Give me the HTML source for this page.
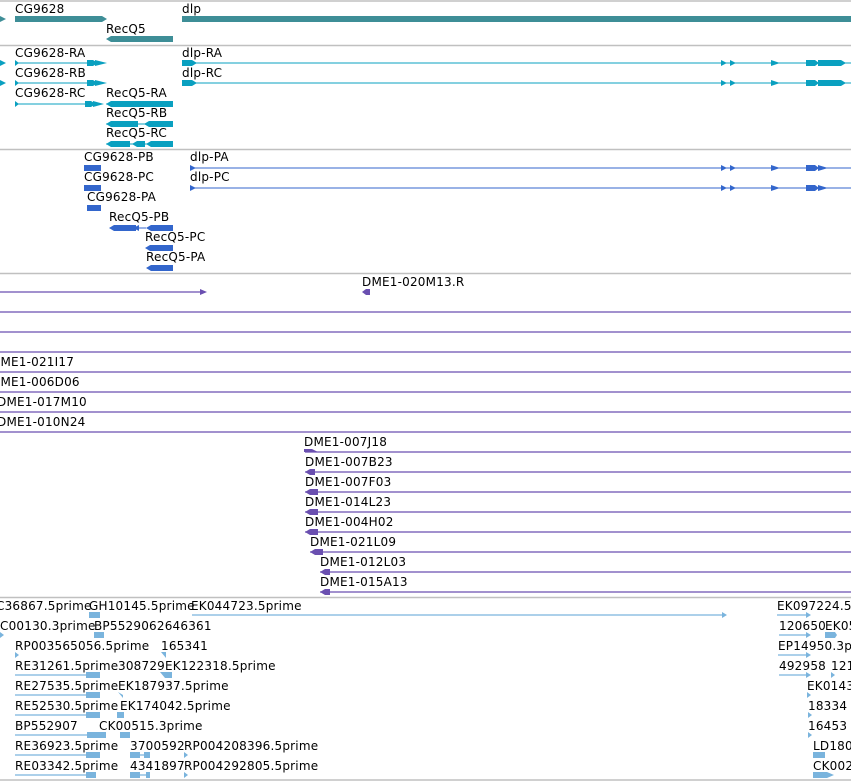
<!DOCTYPE html>
<html><head><meta charset="utf-8"><style>
html,body{margin:0;padding:0;background:#fff;width:851px;height:781px;overflow:hidden}
svg{display:block}
text{font-family:"DejaVu Sans","Liberation Sans",sans-serif;font-size:12px;fill:#000;letter-spacing:0.2px}
</style></head><body>
<svg width="851" height="781" xmlns="http://www.w3.org/2000/svg">
<g stroke="#c0c0c0" stroke-width="1.5">
<line x1="0" y1="1" x2="851" y2="1"/><line x1="0" y1="45.5" x2="851" y2="45.5"/>
<line x1="0" y1="149.5" x2="851" y2="149.5"/><line x1="0" y1="273.5" x2="851" y2="273.5"/>
<line x1="0" y1="597.5" x2="851" y2="597.5"/><line x1="0" y1="780" x2="851" y2="780"/>
</g>
<g fill="#3e8e97">
<polygon points="0,16 6,19 0,22"/>
<polygon points="15,16 102,16 107,19 102,22 15,22"/>
<polygon points="106,39 111,36 173,36 173,42 111,42"/>
<rect x="182" y="16" width="669" height="6"/>
</g>
<text x="15" y="13">CG9628</text><text x="106" y="33">RecQ5</text><text x="182" y="13">dlp</text>
<g fill="#0aa0c0" stroke="#0aa0c0">
<line x1="0" y1="63" x2="4" y2="63"/><line x1="15" y1="63" x2="100" y2="63"/><line x1="182" y1="63" x2="851" y2="63"/>
<line x1="0" y1="83" x2="4" y2="83"/><line x1="15" y1="83" x2="100" y2="83"/><line x1="182" y1="83" x2="851" y2="83"/>
<line x1="15" y1="104" x2="100" y2="104"/>
<line x1="106" y1="104" x2="173" y2="104"/><line x1="106" y1="124" x2="173" y2="124"/><line x1="106" y1="144" x2="173" y2="144"/>
</g>
<g fill="#0aa0c0">
<polygon points="0,60 6,63 0,66"/><polygon points="0,80 6,83 0,86"/>
<polygon points="15,60 19,63 15,66"/><polygon points="15,80 19,83 15,86"/><polygon points="15,101 19,104 15,107"/>
<polygon points="87,60 93,60 98,63 93,66 87,66"/><polygon points="95,60 107,63 95,66"/>
<polygon points="87,80 93,80 98,83 93,86 87,86"/><polygon points="95,80 107,83 95,86"/>
<polygon points="85,101 91,101 96,104 91,107 85,107"/><polygon points="93,101 104,104 93,107"/>
<polygon points="106,104 111,101 173,101 173,107 111,107"/>
<polygon points="106,124 111,121 138,121 138,127 111,127"/><polygon points="144,124 149,121 173,121 173,127 149,127"/>
<polygon points="106,144 111,141 130,141 130,147 111,147"/><polygon points="132,144 137,141 145,141 145,147 137,147"/><polygon points="146,144 151,141 173,141 173,147 151,147"/>
<polygon points="182,60 192,60 197,63 192,66 182,66"/><polygon points="182,80 192,80 197,83 192,86 182,86"/>
<g id="dx"><polygon points="721,60 727,63 721,66"/><polygon points="730,60 736,63 730,66"/><polygon points="771,60 780,63 771,66"/><polygon points="806,60 815,60 819,63 815,66 806,66"/><polygon points="818,60 841,60 846,63 841,66 818,66"/></g>
<use href="#dx" y="20"/>
</g>
<text x="15" y="57">CG9628-RA</text><text x="15" y="77">CG9628-RB</text><text x="15" y="97">CG9628-RC</text>
<text x="106" y="97">RecQ5-RA</text><text x="106" y="117">RecQ5-RB</text><text x="106" y="137">RecQ5-RC</text>
<text x="182" y="57">dlp-RA</text><text x="182" y="77">dlp-RC</text>
<g fill="#3366cc">
<line x1="190" y1="168" x2="851" y2="168" stroke="#3366cc"/><line x1="190" y1="188" x2="851" y2="188" stroke="#3366cc"/>
<polygon points="84,165 101,165 101,171 84,171"/><polygon points="84,185 101,185 101,191 84,191"/><polygon points="87,205 101,205 101,211 87,211"/>
<polygon points="109,228 114,225 136,225 136,231 114,231"/><line x1="136" y1="228" x2="146" y2="228" stroke="#3366cc"/><polygon points="133,228 139,225 139,231"/><polygon points="146,228 151,225 173,225 173,231 151,231"/>
<polygon points="145,248 150,245 173,245 173,251 150,251"/><polygon points="146,268 151,265 173,265 173,271 151,271"/>
<polygon points="190,165 196,168 190,171"/><polygon points="190,185 196,188 190,191"/>
<g id="px"><polygon points="721,165 727,168 721,171"/><polygon points="730,165 736,168 730,171"/><polygon points="771,165 780,168 771,171"/><polygon points="806,165 815,165 819,168 815,171 806,171"/><polygon points="818,165 828,168 818,171"/></g>
<use href="#px" y="20"/>
</g>
<text x="84" y="161">CG9628-PB</text><text x="84" y="181">CG9628-PC</text><text x="87" y="201">CG9628-PA</text>
<text x="109" y="221">RecQ5-PB</text><text x="145" y="241">RecQ5-PC</text><text x="146" y="261">RecQ5-PA</text>
<text x="190" y="161">dlp-PA</text><text x="190" y="181">dlp-PC</text>
<g stroke="#6a4fb0" stroke-width="1.2">
<line x1="0" y1="292" x2="202" y2="292"/><line x1="0" y1="312" x2="851" y2="312"/><line x1="0" y1="332" x2="851" y2="332"/><line x1="0" y1="352" x2="851" y2="352"/>
<line x1="0" y1="372" x2="851" y2="372"/><line x1="0" y1="392" x2="851" y2="392"/><line x1="0" y1="412" x2="851" y2="412"/><line x1="0" y1="432" x2="851" y2="432"/>
<line x1="305" y1="452" x2="851" y2="452"/><line x1="305" y1="472" x2="851" y2="472"/><line x1="305" y1="492" x2="851" y2="492"/><line x1="305" y1="512" x2="851" y2="512"/>
<line x1="305" y1="532" x2="851" y2="532"/><line x1="310" y1="552" x2="851" y2="552"/><line x1="320" y1="572" x2="851" y2="572"/><line x1="320" y1="592" x2="851" y2="592"/>
</g>
<g fill="#6a4fb0">
<polygon points="200,289 207,292 200,295"/><polygon points="362,292 366,289 370,289 370,295 366,295"/>
<polygon points="304,449 312,449 318,452 304,452"/>
<polygon points="305,472 310,469 315,469 315,475 310,475"/><polygon points="305,492 310,489 318,489 318,495 310,495"/>
<polygon points="305,512 310,509 318,509 318,515 310,515"/><polygon points="305,532 310,529 318,529 318,535 310,535"/>
<polygon points="310,552 315,549 323,549 323,555 315,555"/><polygon points="320,572 325,569 330,569 330,575 325,575"/>
<polygon points="320,592 325,589 330,589 330,595 325,595"/>
</g>
<text x="362" y="286">DME1-020M13.R</text>
<text x="-9" y="366">DME1-021I17</text><text x="-9" y="386">DME1-006D06</text><text x="-3" y="406">DME1-017M10</text><text x="-3" y="426">DME1-010N24</text>
<text x="304" y="446">DME1-007J18</text><text x="305" y="466">DME1-007B23</text><text x="305" y="486">DME1-007F03</text><text x="305" y="506">DME1-014L23</text>
<text x="305" y="526">DME1-004H02</text><text x="310" y="546">DME1-021L09</text><text x="320" y="566">DME1-012L03</text><text x="320" y="586">DME1-015A13</text>
<g stroke="#7ab4dd" stroke-width="1.2">
<line x1="192" y1="615" x2="722" y2="615"/><line x1="777" y1="615" x2="808" y2="615"/>
<line x1="779" y1="635" x2="808" y2="635"/><line x1="778" y1="655" x2="808" y2="655"/><line x1="779" y1="675" x2="808" y2="675"/>
<line x1="15" y1="675" x2="98" y2="675"/><line x1="15" y1="695" x2="98" y2="695"/><line x1="15" y1="715" x2="98" y2="715"/>
<line x1="15" y1="735" x2="104" y2="735"/><line x1="15" y1="755" x2="98" y2="755"/><line x1="15" y1="775" x2="95" y2="775"/>
<line x1="130" y1="755" x2="150" y2="755"/><line x1="130" y1="775" x2="150" y2="775"/>
</g>
<g fill="#7ab4dd">
<polygon points="89,612 100,612 100,618 89,618"/><polygon points="722,612 727,615 722,618"/><polygon points="806,612 811,615 806,618"/>
<polygon points="0,632 4,635 0,638"/><polygon points="94,632 104,632 104,638 94,638"/><polygon points="806,632 811,635 806,638"/><polygon points="825,632 835,632 837,635 835,638 825,638"/>
<polygon points="15,652 19,655 15,658"/><polygon points="161,652 166,652 166,658"/><polygon points="806,652 811,655 806,658"/>
<polygon points="160,672 172,672 172,678 165,678"/><polygon points="806,672 811,675 806,678"/><polygon points="831,672 835,675 831,678"/>
<polygon points="118,692 123,695 123,698"/><polygon points="807,692 811,695 807,698"/>
<polygon points="117,712 124,712 124,718 117,718"/><polygon points="808,712 812,715 808,718"/>
<polygon points="120,732 130,732 130,738 120,738"/><polygon points="808,732 812,735 808,738"/>
<polygon points="87,732 106,732 106,738 87,738"/>
<polygon points="184,752 188,755 184,758"/><polygon points="184,772 188,775 184,778"/>
<polygon points="130,752 140,752 140,758 130,758"/><polygon points="144,752 150,752 150,758 144,758"/>
<polygon points="130,772 140,772 140,778 130,778"/><polygon points="146,772 150,772 150,778 146,778"/>
<polygon points="813,752 825,752 825,758 813,758"/><polygon points="813,772 827,772 834,775 827,778 813,778"/>
<polygon points="86,672 100,672 100,678 86,678"/><polygon points="86,692 100,692 100,698 86,698"/><polygon points="86,712 100,712 100,718 86,718"/>
<polygon points="86,752 100,752 100,758 86,758"/><polygon points="86,772 96,772 96,778 86,778"/>
</g>
<text x="-4" y="610">C36867.5prime</text><text x="89" y="610">GH10145.5prime</text><text x="191" y="610">EK044723.5prime</text><text x="777" y="610">EK097224.5</text>
<text x="0" y="630">C00130.3prime</text><text x="94" y="630">BP5529062646361</text><text x="779" y="630">120650</text><text x="825" y="630">EK05</text>
<text x="15" y="650">RP003565056.5prime</text><text x="161" y="650">165341</text><text x="778" y="650">EP14950.3p</text>
<text x="15" y="670">RE31261.5prime</text><text x="118" y="670">308729</text><text x="165" y="670">EK122318.5prime</text><text x="779" y="670">492958</text><text x="831" y="670">121</text>
<text x="15" y="690">RE27535.5prime</text><text x="118" y="690">EK187937.5prime</text><text x="807" y="690">EK0143</text>
<text x="15" y="710">RE52530.5prime</text><text x="120" y="710">EK174042.5prime</text><text x="808" y="710">18334</text>
<text x="15" y="730">BP552907</text><text x="99" y="730">CK00515.3prime</text><text x="808" y="730">16453</text>
<text x="15" y="750">RE36923.5prime</text><text x="130" y="750">3700592</text><text x="184" y="750">RP004208396.5prime</text><text x="813" y="750">LD180</text>
<text x="15" y="770">RE03342.5prime</text><text x="130" y="770">4341897</text><text x="184" y="770">RP004292805.5prime</text><text x="813" y="770">CK002</text>
</svg>
</body></html>
